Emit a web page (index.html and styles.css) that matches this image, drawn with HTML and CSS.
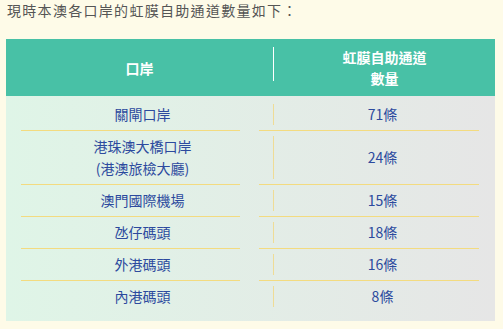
FILE: index.html
```html
<!DOCTYPE html>
<html lang="zh-Hant">
<head>
<meta charset="utf-8">
<link rel="stylesheet" href="styles.css">
</head>
<body>
<div class="page">
  <p class="intro">現時本澳各口岸的虹膜自助通道數量如下：</p>
  <div class="table">
    <div class="thead">
      <div class="th th-port">口岸</div>
      <div class="th-divider"></div>
      <div class="th th-count">虹膜自助通道<br>數量</div>
    </div>
    <div class="tbody">
      <div class="row"><div class="cell port">關閘口岸</div><div class="cell count">71條</div></div>
      <div class="sep"><span></span><span class="line"></span><span></span><span class="line"></span></div>
      <div class="row row-tall"><div class="cell port">港珠澳大橋口岸<br>(港澳旅檢大廳)</div><div class="cell count">24條</div></div>
      <div class="sep"><span></span><span class="line"></span><span></span><span class="line"></span></div>
      <div class="row"><div class="cell port">澳門國際機場</div><div class="cell count">15條</div></div>
      <div class="sep"><span></span><span class="line"></span><span></span><span class="line"></span></div>
      <div class="row"><div class="cell port">氹仔碼頭</div><div class="cell count">18條</div></div>
      <div class="sep"><span></span><span class="line"></span><span></span><span class="line"></span></div>
      <div class="row"><div class="cell port">外港碼頭</div><div class="cell count">16條</div></div>
      <div class="sep"><span></span><span class="line"></span><span></span><span class="line"></span></div>
      <div class="row"><div class="cell port">內港碼頭</div><div class="cell count">8條</div></div>
    </div>
  </div>
</div>
</body>
</html>
```
FILE: styles.css
```css
html, body {
  margin: 0;
  padding: 0;
  background: #fefbe8;
}
body {
  font-family: "Noto Sans CJK TC", "Noto Sans", sans-serif;
  font-size: 14px;
}
.page {
  padding: 0 8px 8px 6px;
}
.intro {
  margin: 0 0 18px 1px;
  line-height: 21px;
  color: #555555;
  letter-spacing: 1.3px;
}
.table {
  width: 489px;
}
.thead {
  display: flex;
  background: #48c1a6;
  color: #ffffff;
  font-weight: bold;
  padding: 8px 0 7px;
  line-height: 21px;
}
.th {
  text-align: center;
  display: flex;
  align-items: center;
  justify-content: center;
}
.th-port {
  width: 267px;
  padding-top: 1px;
}
.th-divider {
  width: 1px;
  height: 34px;
  background: #ffffff;
  align-self: flex-start;
}
.th-count {
  flex: 1;
}
.tbody {
  background: linear-gradient(to right, #dff5e7, #e6e6e6);
  padding: 3px 0 9px;
  color: #2c4a9e;
}
.row {
  display: grid;
  grid-template-columns: 261px 1fr;
  padding: 5px 4px 5px 6px;
  line-height: 21px;
}
.row-tall .port {
  line-height: 21.5px;
}
.cell {
  text-align: center;
}
.count {
  border-left: 1px solid #efdc96;
  display: flex;
  align-items: center;
  justify-content: center;
}
.sep {
  display: grid;
  grid-template-columns: 15px 219px 19px 220px;
  height: 1px;
}
.sep .line {
  background: #f3db80;
}
```
